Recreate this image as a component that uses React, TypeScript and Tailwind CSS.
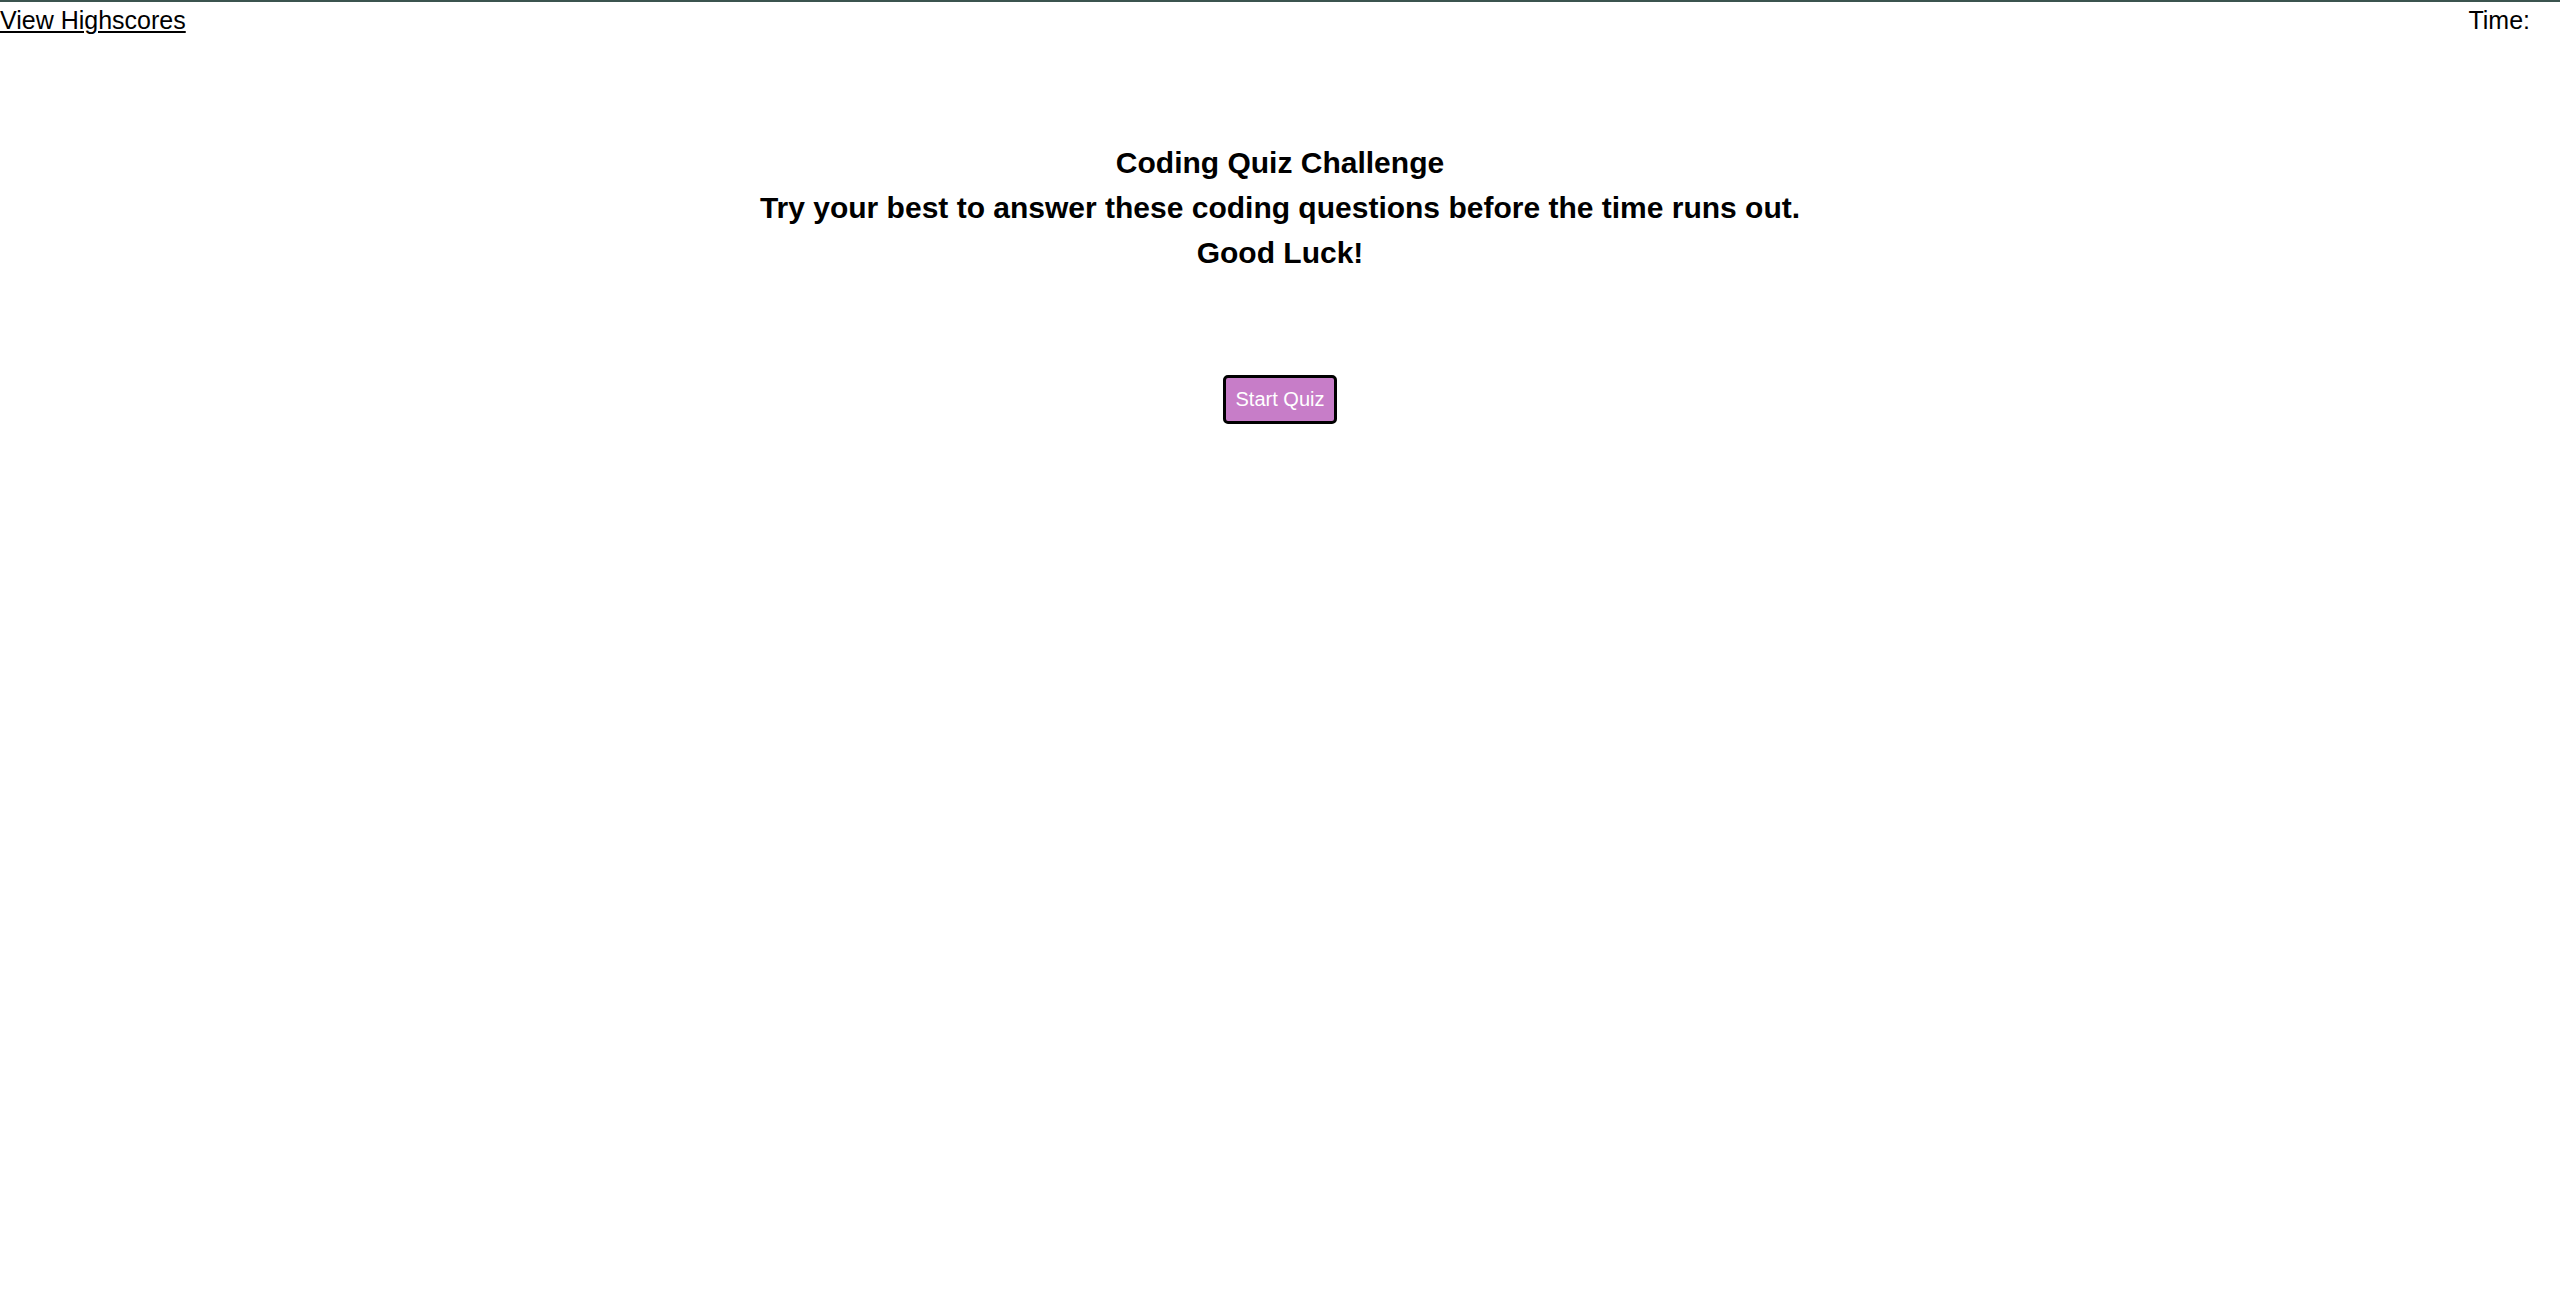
export default function App() {
  return (
    <div className="min-h-screen bg-white border-t-2 border-[#3b544f] text-black font-['Liberation_Sans',Arial,sans-serif]">
      {/* top bar */}
      <header className="flex justify-between items-start pt-[4px] text-[25px] leading-[29px]">
        <a href="#" className="underline">
          View Highscores
        </a>
        <span className="pr-[30px]">
          Time: <span id="time"></span>
        </span>
      </header>

      {/* intro */}
      <main className="flex flex-col items-center text-center">
        <h3 className="mt-[105px] text-[30px] leading-[45px] font-bold">
          Coding Quiz Challenge
          <br />
          Try your best to answer these coding questions before the time runs out.
          <br />
          Good Luck!
        </h3>

        <button className="mt-[100px] bg-[#c77dc8] text-white text-[20px] leading-[23px] px-[10px] py-[10px] border-[3px] border-black rounded-[5px]">
          Start Quiz
        </button>
      </main>
    </div>
  )
}
